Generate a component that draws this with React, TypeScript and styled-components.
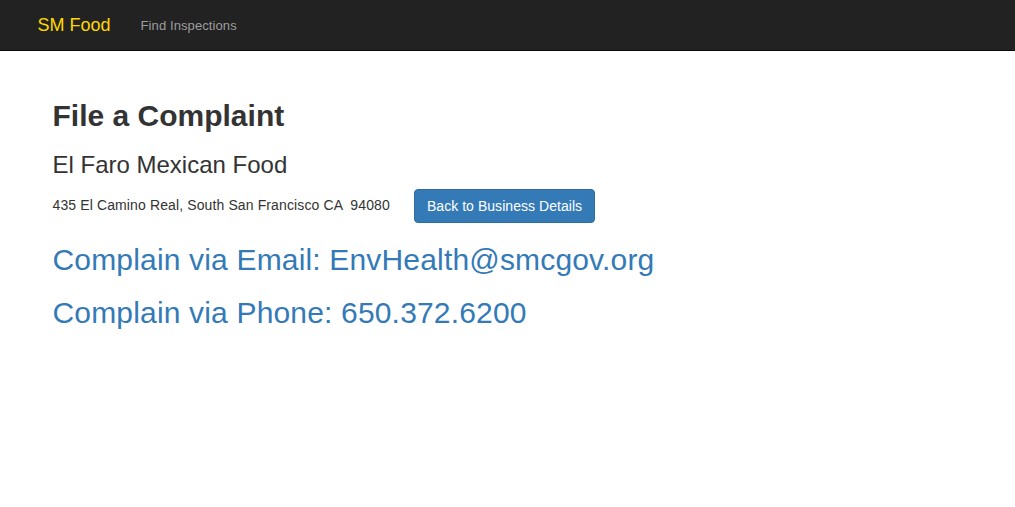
import { FC } from 'react';
import styled, { createGlobalStyle } from 'styled-components';

const GlobalStyle = createGlobalStyle`
  * {
    box-sizing: border-box;
  }

  body {
    margin: 0;
    font-family: "Liberation Sans", Arial, Helvetica, sans-serif;
    font-size: 14px;
    line-height: 1.42857;
    color: #333;
    background: #fff;
  }
`;

const Navbar = styled.nav`
  height: 51px;
  background: #222;
  border-bottom: 1px solid #080808;
`;

const NavContainer = styled.div`
  width: 970px;
  margin: 0 auto;
  padding: 0 15px;
  display: flex;
  align-items: center;
`;

const Brand = styled.a`
  display: block;
  height: 50px;
  padding: 15px 15px 15px 0;
  font-size: 18px;
  line-height: 20px;
  color: #ffd700;
  text-decoration: none;
`;

const NavLink = styled.a`
  display: block;
  padding: 16px 15px 14px;
  font-size: 13px;
  line-height: 20px;
  letter-spacing: 0.1px;
  color: #9d9d9d;
  text-decoration: none;
`;

const Container = styled.div`
  width: 970px;
  margin: 0 auto;
  padding: 48px 30px 0;
`;

const Title = styled.h2`
  margin: 0;
  font-size: 30px;
  font-weight: 700;
  line-height: 1.1;
`;

const Subtitle = styled.h3`
  margin: 20px 0 0;
  font-size: 24px;
  font-weight: 400;
  line-height: 1.1;
`;

const AddressRow = styled.div`
  display: flex;
  align-items: center;
  gap: 24px;
  margin-top: 11px;
`;

const Address = styled.span`
  font-size: 14px;
  letter-spacing: 0.12px;
  white-space: pre;
`;

const Button = styled.a`
  display: inline-block;
  padding: 6px 12px;
  font-size: 14px;
  line-height: 20px;
  letter-spacing: 0.05px;
  color: #fff;
  background: #337ab7;
  border: 1px solid #2e6da4;
  border-radius: 4px;
  text-decoration: none;
`;

const ContactLink = styled.a`
  display: block;
  margin-top: 19px;
  font-size: 30px;
  line-height: 34px;
  letter-spacing: 0.17px;
  color: #337ab7;
  text-decoration: none;

  &:first-of-type {
    margin-top: 20px;
  }
`;

const App: FC = () => (
  <>
    <GlobalStyle />
    <Navbar>
      <NavContainer>
        <Brand href="#">SM Food</Brand>
        <NavLink href="#">Find Inspections</NavLink>
      </NavContainer>
    </Navbar>
    <Container>
      <Title>File a Complaint</Title>
      <Subtitle>El Faro Mexican Food</Subtitle>
      <AddressRow>
        <Address>435 El Camino Real, South San Francisco CA  94080</Address>
        <Button href="#">Back to Business Details</Button>
      </AddressRow>
      <ContactLink href="#">Complain via Email: EnvHealth@smcgov.org</ContactLink>
      <ContactLink href="#">Complain via Phone: 650.372.6200</ContactLink>
    </Container>
  </>
);

export default App;
